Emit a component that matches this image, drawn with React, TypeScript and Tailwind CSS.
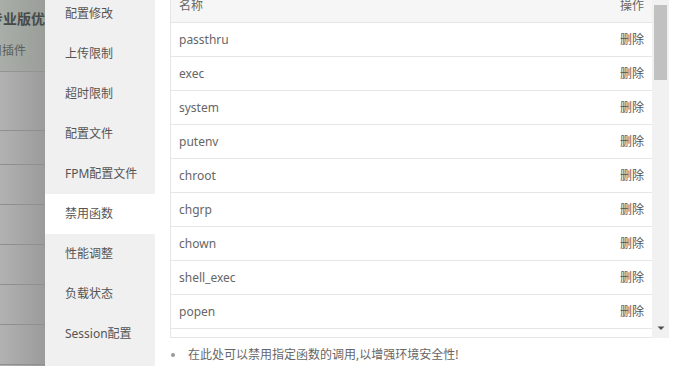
import React from 'react'

const menu = ['配置修改', '上传限制', '超时限制', '配置文件', 'FPM配置文件', '禁用函数', '性能调整', '负载状态', 'Session配置']
const funcs = ['passthru', 'exec', 'system', 'putenv', 'chroot', 'chgrp', 'chown', 'shell_exec', 'popen']

export default function App() {
  return (
    <div
      className="flex w-[680px] h-[366px] overflow-hidden bg-white text-[12px] text-[#666]"
      style={{ fontFamily: '"Noto Sans", "Noto Sans CJK SC", sans-serif' }}
    >
      {/* dimmed page behind the drawer */}
      <div className="w-[45px] shrink-0 flex flex-col overflow-hidden bg-gradient-to-r from-[#b2b2b2] to-[#9b9b9b]">
        <div className="h-[72px] shrink-0 border-b border-[#939393] bg-gradient-to-r from-[#aaaea8] to-[#9a9e98] overflow-hidden">
          <div className="-ml-[11px] mt-[8px] whitespace-nowrap text-[14px] font-bold text-[#474b4a]">专业版优</div>
          <div className="-ml-[10px] mt-[13px] whitespace-nowrap text-[12px] text-[#5b5f5c]">用插件</div>
        </div>
        <div className="h-[59px] shrink-0 border-b border-[#8f8f8f]" />
        <div className="h-[34px] shrink-0 border-b border-[#8f8f8f]" />
        <div className="h-[40px] shrink-0 border-b border-[#8f8f8f]" />
        <div className="h-[40px] shrink-0 border-b border-[#8f8f8f]" />
        <div className="h-[40px] shrink-0 border-b border-[#8f8f8f]" />
        <div className="h-[40px] shrink-0 border-b border-[#8f8f8f]" />
        <div className="h-[40px] shrink-0 border-b border-[#8f8f8f]" />
      </div>

      {/* drawer side menu */}
      <div className="w-[110px] shrink-0 bg-[#f0f0f0]">
        <div className="-mt-[6px]">
          {menu.map((m) => (
            <div
              key={m}
              className={`h-[40px] flex items-center pl-[20px] text-[12px] text-[#555] ${m === '禁用函数' ? 'bg-white' : ''}`}
            >
              {m}
            </div>
          ))}
        </div>
      </div>

      {/* main */}
      <div className="flex-1 pl-[15px] pr-[10px]">
        <div className="-mt-[12px] flex h-[350px]">
          <div className="w-[482px] border border-[#e6e6e6] border-r-0 overflow-hidden">
            <div className="h-[34px] flex items-center justify-between px-[8px] bg-[#f6f6f6] border-b border-[#e6e6e6] text-[#666]">
              <span>名称</span>
              <span>操作</span>
            </div>
            {funcs.map((f) => (
              <div key={f} className="h-[34px] flex items-center justify-between px-[8px] border-b border-[#e6e6e6]">
                <span className="text-[#666]">{f}</span>
                <span className="text-[#555]">删除</span>
              </div>
            ))}
            <div className="h-[34px]" />
          </div>
          {/* scrollbar */}
          <div className="w-[17px] bg-[#f1f1f1] flex flex-col items-center">
            <div className="mt-[17px] w-[13px] h-[75px] bg-[#c1c1c1]" />
            <div className="flex-1" />
            <svg width="8" height="6" viewBox="0 0 8 6" className="mb-[7px]">
              <path d="M0.5 1.5 H7.5 L4 5 Z" fill="#505050" />
            </svg>
          </div>
        </div>
        <div className="flex items-center h-[28px] mt-[3px]">
          <span className="w-[4px] h-[4px] rounded-full bg-[#999] ml-[1px]" />
          <span className="ml-[13px] text-[#666]">在此处可以禁用指定函数的调用,以增强环境安全性!</span>
        </div>
      </div>
    </div>
  )
}
